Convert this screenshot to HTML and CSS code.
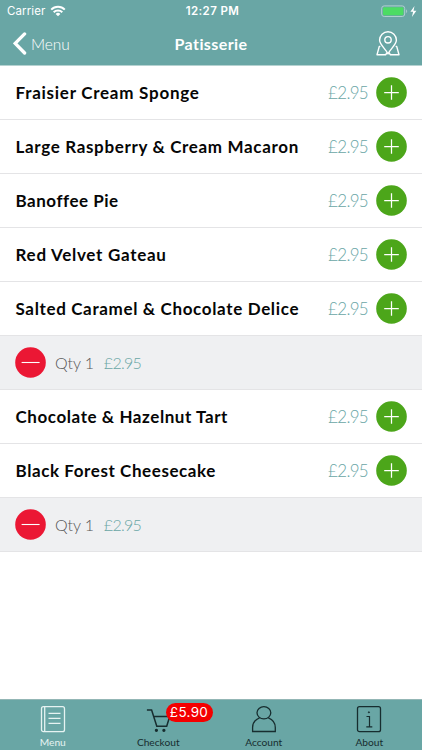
FILE: index.html
```html
<!DOCTYPE html>
<html lang="en">
<head>
<meta charset="utf-8">
<title>Patisserie</title>
<link rel="stylesheet" href="styles.css">
</head>
<body>
<svg class="defs" aria-hidden="true">
  <symbol id="plus" viewBox="0 0 31 31"><circle cx="15.5" cy="15.5" r="15.3" fill="#4ca61a"/><path d="M8.2 15.5h14.6M15.5 8.2v14.6" stroke="#fff" stroke-width="1.25"/></symbol>
  <symbol id="minus" viewBox="0 0 31 31"><circle cx="15.5" cy="15.5" r="15.3" fill="#eb1734"/><path d="M6.6 15.5h18" stroke="#fff" stroke-width="1.1"/></symbol>
</svg>
<div class="app">
  <header>
    <div class="status">
      <div class="carrier"><span>Carrier</span>
        <svg width="16" height="12" viewBox="0 0 16 12" fill="none" stroke="#fff" stroke-width="2"><path d="M1.2 4.6a9.6 9.6 0 0 1 13.6 0M3.7 7.2a6.1 6.1 0 0 1 8.6 0"/><path d="M5.6 8.9a3.4 3.4 0 0 1 4.8 0L8 11.3z" fill="#fff" stroke="none"/></svg>
      </div>
      <div class="clock">12:27 PM</div>
      <svg class="battery" width="37" height="13" viewBox="0 0 37 13"><rect x=".7" y=".9" width="23" height="10.6" rx="2.5" fill="none" stroke="#b0d0ce"/><rect x="2" y="2.2" width="20.4" height="8" rx="1.2" fill="#4cdc64"/><path d="M25.2 4.2q2 2 0 4z" fill="#b0d0ce"/><path d="M33.5 1L29.4 6.8h2.7L30.9 12l4.5-6.3h-2.9z" fill="#fff"/></svg>
    </div>
    <nav class="bar">
      <div class="back"><svg width="14" height="23" viewBox="0 0 14 23"><path d="M11.6 1.9L2.2 11.4l9.4 9.6" fill="none" stroke="#fff" stroke-width="3.3" stroke-linecap="round"/></svg><span>Menu</span></div>
      <h1>Patisserie</h1>
      <svg class="pin" width="24" height="25" viewBox="0 0 24 25" fill="none" stroke="#fff" stroke-width="1.4" stroke-linejoin="round"><path d="M12 22.9C9.7 17.9 3.6 13.8 3.6 9.1a8.4 8.4 0 0 1 16.8 0c0 4.7-6.1 8.8-8.4 13.8z"/><circle cx="12" cy="8.8" r="3.2"/><path d="M4.400 15.400H3.300L1 23.800h8.800l1-2.400M19.600 15.400h1.100l2.300 8.400h-8.800l-1-2.400"/></svg>
    </nav>
  </header>
  <main>
    <div class="row"><span class="name n1">Fraisier Cream Sponge</span><span class="price">£2.95</span><svg class="btn"><use href="#plus"/></svg></div>
    <div class="row"><span class="name n2">Large Raspberry &amp; Cream Macaron</span><span class="price">£2.95</span><svg class="btn"><use href="#plus"/></svg></div>
    <div class="row"><span class="name n3">Banoffee Pie</span><span class="price">£2.95</span><svg class="btn"><use href="#plus"/></svg></div>
    <div class="row"><span class="name n4">Red Velvet Gateau</span><span class="price">£2.95</span><svg class="btn"><use href="#plus"/></svg></div>
    <div class="row"><span class="name n5">Salted Caramel &amp; Chocolate Delice</span><span class="price">£2.95</span><svg class="btn"><use href="#plus"/></svg></div>
    <div class="row picked"><svg class="btn"><use href="#minus"/></svg><span class="qty">Qty 1</span><span class="sum">£2.95</span></div>
    <div class="row"><span class="name n6">Chocolate &amp; Hazelnut Tart</span><span class="price">£2.95</span><svg class="btn"><use href="#plus"/></svg></div>
    <div class="row"><span class="name n7">Black Forest Cheesecake</span><span class="price">£2.95</span><svg class="btn"><use href="#plus"/></svg></div>
    <div class="row picked"><svg class="btn"><use href="#minus"/></svg><span class="qty">Qty 1</span><span class="sum">£2.95</span></div>
  </main>
  <footer>
    <div class="tab active"><svg viewBox="0 0 26 28"><rect x="1.5" y="1.7" width="23" height="25" rx="2"/><path d="M4.700 1.700v25M8.500 8.300h12M8.500 13.300h12M8.500 18.300h12"/></svg><span>Menu</span></div>
    <div class="tab"><svg viewBox="0 0 26 28"><path d="M1.900 5h4.700l5.200 16.300h9.900l3-9.800H8.700" stroke-width="1.500"/><circle cx="11.400" cy="25.300" r="1" fill="#172d2f"/><circle cx="18.900" cy="25.300" r="1" fill="#172d2f"/></svg><span>Checkout</span><b class="badge">£5.90</b></div>
    <div class="tab"><svg viewBox="0 0 26 28"><ellipse cx="12.900" cy="7.800" rx="6.900" ry="6.100"/><path d="M8.600 12.800C4.300 14.500 1.600 18.200 1.600 22.500v4h22.700v-4c0-4.300-2.700-8-7-9.700"/></svg><span>Account</span></div>
    <div class="tab"><svg viewBox="0 0 26 28"><rect x="1.5" y="1.7" width="23" height="25" rx="2"/><path d="M10.500 11.500h3v10.300M10.300 21.800h6" stroke-width="1.200"/><circle cx="12.900" cy="7.300" r=".6" fill="#172d2f" stroke-width=".8"/></svg><span>About</span></div>
  </footer>
</div>
</body>
</html>
```

FILE: styles.css
```css
* { box-sizing: border-box; }
body { margin: 0; background: #fff; font-family: Lato, "Open Sans", sans-serif; color: #060606; }
svg { display: block; flex: none; }
.defs { position: absolute; width: 0; height: 0; }
.app { width: 422px; height: 750px; display: flex; flex-direction: column; overflow: hidden; white-space: nowrap; }
header { height: 66px; background: #69a6a5; border-bottom: 1px solid #b5d2d1; color: #fff; flex: none; }
.status { height: 22px; display: grid; grid-template-columns: 1fr auto 1fr; align-items: center; padding: 0 4px 0 7px; font-family: Inter, sans-serif; font-size: 11.5px; line-height: 22px; }
.carrier { display: flex; gap: 5px; align-items: center; letter-spacing: .1px; }
.carrier svg { margin-top: -1px; }
.clock { font-weight: 600; letter-spacing: .4px; }
.battery { justify-self: end; }
.bar { height: 43px; display: grid; grid-template-columns: 1fr auto 1fr; align-items: center; padding: 0 22px 0 13px; }
.back { display: flex; align-items: center; gap: 4px; font-size: 15.5px; font-weight: 300; letter-spacing: -.1px; }
h1 { margin: 0 -9px 0 0; font-size: 16px; font-weight: 700; letter-spacing: .4px; }
.pin { justify-self: end; }
main { flex: 1; }
.row { height: 54px; display: flex; align-items: center; padding: 0 15px; border-bottom: 1px solid #e4e4e6; }
.name { font-size: 17px; font-weight: 700; flex: 1; padding-left: .5px; }
.n1 { letter-spacing: .74px; }
.n2 { letter-spacing: .66px; }
.n3 { letter-spacing: .52px; }
.n4 { letter-spacing: .72px; }
.n5 { letter-spacing: .65px; }
.n6 { letter-spacing: .57px; }
.n7 { letter-spacing: .58px; }
.price, .sum { color: #69a6a5; font-weight: 300; }
.price { margin-right: 8px; font-size: 17px; letter-spacing: -.7px; }
.btn { width: 31px; height: 31px; }
.picked { background: #eff0f2; }
.qty { margin: 0 10px 0 9px; color: #555; font-weight: 300; font-size: 16px; letter-spacing: -.1px; }
.sum { font-size: 16px; letter-spacing: -.7px; }
footer { height: 51px; flex: none; background: #69a6a5; border-top: 1px solid #93b6b5; display: grid; grid-template-columns: repeat(4, 1fr); color: #172d2f; }
.tab { position: relative; display: flex; flex-direction: column; align-items: center; padding-top: 5px; font-size: 10.2px; line-height: 14px; }
.tab svg { width: 26px; height: 28px; fill: none; stroke: currentColor; stroke-width: 1.3; }
.tab span { margin-top: 2px; }
.active { color: #e6f3f2; }
.badge { position: absolute; left: 60px; top: 3px; width: 47px; height: 19px; border-radius: 10px; background: #f40000; color: #fff; font: 400 13.5px/19px Inter, sans-serif; letter-spacing: .3px; text-align: center; }
```
